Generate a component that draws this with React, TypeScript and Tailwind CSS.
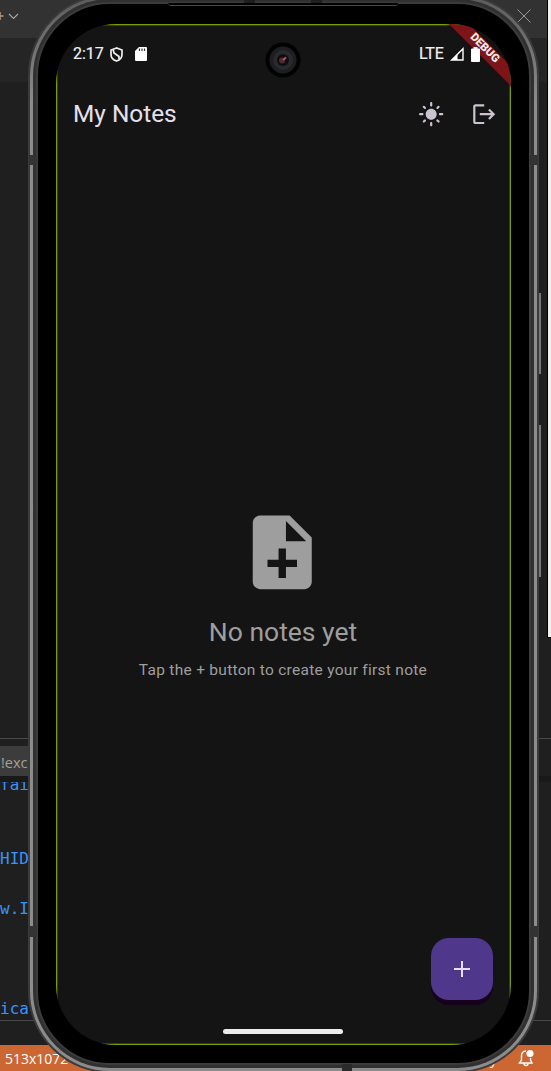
import { MdLightMode, MdLogout, MdNoteAdd } from "react-icons/md";

function Editor() {
  return (
    <div className="flex h-full flex-col bg-[#1f1f1f]">
      <div className="flex h-[38px] shrink-0 items-center justify-between bg-[#323232] pr-[20px]">
        <svg width="20" height="16" viewBox="0 0 20 16" className="mb-[6px]" fill="none">
          <path d="M0 4v8M0 8h3.500" stroke="#b5957c" strokeWidth="1.5" />
          <path d="M9 6l4.500 4.500L18 6" stroke="#a5a5a5" strokeWidth="1.2" />
        </svg>
        <svg width="14" height="14" viewBox="0 0 14 14" className="mb-[6px]" stroke="#969696">
          <path d="M.5 .5l13 13M13.500 .5l-13 13" />
        </svg>
      </div>
      <div className="h-[44px] shrink-0 bg-[#252525]" />
      <div className="h-[656px] shrink-0" />
      <div className="h-px shrink-0 bg-[#4a4a4a]" />
      <div className="h-[7px] shrink-0" />
      <div className="flex h-[30px] w-[60px] shrink-0 items-center bg-[#3c3c3c] pl-[1px] pt-[3px] font-['Open_Sans',sans-serif] text-[14.500px] text-[#a5a095]">
        !exc
      </div>
      <div className="h-[6px] shrink-0 bg-[#191919]" />
      <div className="flex h-[238px] shrink-0 flex-col overflow-hidden font-['DejaVu_Sans_Mono',monospace] text-[16px] leading-[25px] text-[#3794ff]">
        <div className="-mt-[10px] h-[74px]">fai</div>
        <div className="h-[50px]">HID</div>
        <div className="h-[100px]">w.I</div>
        <div className="h-[24px]">icat</div>
      </div>
      <div className="h-px shrink-0 bg-[#4a4a4a]" />
      <div className="h-[24px] shrink-0" />
      <div className="flex h-[26px] shrink-0 items-center justify-between bg-[#cc6633] pl-[5px] pr-[16px] font-['Open_Sans',sans-serif] text-[14px] text-white">
        <span>513x1072</span>
        <span className="flex items-center gap-[21px]">
          <span>y</span>
          <svg width="17" height="18" viewBox="0 0 17 18" fill="none" className="mb-px">
            <path d="M8 2C5 2 3.500 4 3.500 7v4L1.500 14h12.500l-1.500-3V9M6 14.500a2 2 0 0 0 4 0" stroke="#fff" strokeWidth="1.4" />
            <circle cx="12" cy="4.500" r="3.600" fill="#fff" />
          </svg>
        </span>
      </div>
    </div>
  );
}

function StatusBar() {
  return (
    <div className="flex h-[58px] items-center justify-between pl-[16px] pr-[30px] text-[16px] text-[#f1f1f1]">
      <div className="flex items-center">
        <span className="w-[37px] [-webkit-text-stroke:0.200px_#f1f1f1]">2:17</span>
        <svg width="13" height="15" viewBox="0 0 13 15" fill="none" stroke="#eee" strokeWidth="1.700">
          <path d="M6.500 1L1 3v4.500c0 3 2.300 5.500 5.500 6.500 3.200-1 5.500-3.500 5.500-6.500V3z" />
          <path d="M3.200 2.800L4 6l5 3.500v2.500" />
        </svg>
        <svg width="12" height="14" viewBox="0 0 12 14" className="ml-[12px]">
          <path d="M4 0h7a1 1 0 0 1 1 1v12a1 1 0 0 1-1 1H1a1 1 0 0 1-1-1V4z" fill="#fff" />
          <path d="M4.500 1.500v2.500M7 1.500v2.500M9.500 1.500v2.500" stroke="#333" strokeWidth="1.200" />
        </svg>
      </div>
      <div className="flex items-center">
        <span className="w-[31px] tracking-[-0.100px] [-webkit-text-stroke:0.200px_#f1f1f1]">LTE</span>
        <svg width="14" height="14" viewBox="0 0 14 14">
          <path d="M13 1.700V13H1.700z" fill="none" stroke="#fff" strokeWidth="1.400" />
          <path d="M7.500 7V13H1.500z" fill="#fff" />
        </svg>
        <svg width="9" height="15" viewBox="0 0 9 15" className="relative z-30 ml-[7px]">
          <path d="M2.500 0h4v1.500H8a1 1 0 0 1 1 1V14a1 1 0 0 1-1 1H1a1 1 0 0 1-1-1V2.500a1 1 0 0 1 1-1h1.500z" fill="#fff" />
        </svg>
      </div>
    </div>
  );
}

function Screen() {
  return (
    <div className="relative h-[1021px] w-[455px] overflow-hidden rounded-[60px] bg-[#141414]">
      <div className="flex h-full flex-col border border-[#7a9f00] font-['Roboto',sans-serif] shadow-[inset_0_0_0_1px_#33400a]">
        <StatusBar />
        <header className="flex h-[62px] items-center justify-between pl-[16px] pr-[13px] text-[#cac4d0]">
          <h1 className="text-[24.400px] leading-none text-[#e6e0e9]">My Notes</h1>
          <div className="flex gap-[26px]">
            <MdLightMode size={26.400} />
            <MdLogout size={26.400} />
          </div>
        </header>
        <main className="flex grow flex-col items-center pr-px pt-[363px] text-[#9e9e9e]">
          <MdNoteAdd size={88.500} className="relative -left-[0.500px]" />
          <h2 className="mt-[18px] text-[26.500px] leading-[34px]">No notes yet</h2>
          <p className="mt-[10px] text-[15.500px] leading-[22px] tracking-[0.280px]">Tap the + button to create your first note</p>
        </main>
        <div className="mb-[29px] mr-[17px] flex size-[62px] shrink-0 items-center justify-center self-end rounded-[18px] bg-[#4f378b] shadow-[0_5px_0_0_#16001c]">
          <svg width="16" height="16" viewBox="0 0 16 16" stroke="#eaddff" strokeWidth="2">
            <path d="M8 0v16M0 8h16" />
          </svg>
        </div>
        <div className="mb-[10px] mr-px h-[5px] w-[120px] shrink-0 self-center rounded-full bg-[#ececec]" />
      </div>
      <div className="absolute left-[380px] top-[18px] z-20 flex h-[13.500px] w-[96px] rotate-45 items-center justify-center bg-[#7d1518] font-['Roboto',sans-serif] text-[11.300px] font-black text-[#eeeaea] shadow-[0_0_3px_#300020]">
        DEBUG
      </div>
    </div>
  );
}

function Camera() {
  return (
    <svg className="absolute left-[265px] top-[42px]" width="36" height="36" viewBox="0 0 36 36">
      <circle cx="18" cy="18" r="17.500" fill="#030203" />
      <circle cx="18" cy="18" r="13.500" fill="#1d1e20" />
      <circle cx="18" cy="18" r="10" fill="#292a2d" />
      <circle cx="18" cy="18" r="6" fill="#100d10" />
      <circle cx="17" cy="18.500" r="3" fill="#4b2b2b" />
      <path d="M18 18l3-2.500" stroke="#c04870" strokeWidth="2" />
    </svg>
  );
}

function Phone() {
  return (
    <div className="absolute -top-[6px] left-[28px] h-[1079px] w-[511px] rounded-[82px] border-2 border-[#3b3b3b] bg-[#858585] bg-linear-to-b from-[#5c5c5c] via-[#8c8c8c] via-10% to-[#8c8c8c] p-[3px]">
      <div className="h-full rounded-[77px] bg-[#303030] p-[3px]">
        <div className="h-full rounded-[74px] border-2 border-[#3c3c3c] bg-black" />
      </div>
    </div>
  );
}

export default function App() {
  return (
    <div className="relative h-[1071px] w-[551px] overflow-hidden bg-[#1f1f1f]">
      <Editor />
      <div className="absolute left-[547px] top-0 h-[638px] w-[4px] border-b border-l border-black bg-[#f3f0f0]" />
      <div className="absolute left-[538px] top-[292px] h-[83px] w-[4px] border border-[#222] bg-[#777]" />
      <div className="absolute left-[538px] top-[424px] h-[154px] w-[4px] border border-[#222] bg-[#777]" />
      <Phone />
      <div className="absolute left-[168px] top-[3px] h-[3px] w-[230px] rounded-b-[3px] border-b border-[#484848] bg-black" />
      <div className="absolute left-[56px] top-[24px]">
        <Screen />
      </div>
      <Camera />
      <div className="absolute left-[29px] top-[155px] h-[10px] w-[8px] bg-[#333]" />
      <div className="absolute left-[530px] top-[155px] h-[10px] w-[8px] bg-[#333]" />
      <div className="absolute left-[29px] top-[926px] h-[11px] w-[8px] bg-[#333]" />
      <div className="absolute left-[530px] top-[926px] h-[11px] w-[8px] bg-[#333]" />
      <div className="absolute left-[244px] top-0 h-[3px] w-[11px] bg-[#1e1e1e]" />
      <div className="absolute left-[311px] top-0 h-[3px] w-[11px] bg-[#1e1e1e]" />
      <div className="absolute left-[342px] top-[1064px] h-[7px] w-[10px] bg-[#2a2a2a]" />
    </div>
  );
}
